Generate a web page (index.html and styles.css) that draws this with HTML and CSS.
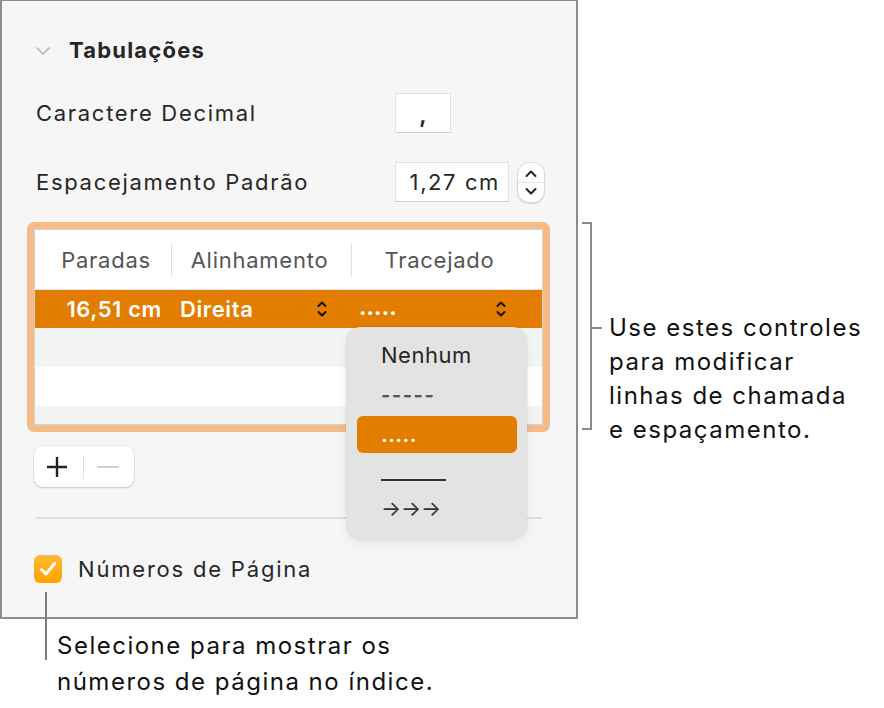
FILE: index.html
```html
<!DOCTYPE html>
<html lang="pt">
<head>
  <meta charset="UTF-8" />
  <meta name="viewport" content="width=device-width, initial-scale=1.0"/>
  <title>Tabulações</title>
  <link rel="stylesheet" href="styles.css">
</head>
<body>

  <div class="pagina">
    <div class="fila-superior">

      <!-- Painel de formato -->
      <div class="painel">
        <div class="secao-titulo">
          <svg class="seta-secao" width="14" height="8" viewBox="0 0 14 8">
            <path d="M1 1 L7 7 L13 1" fill="none" stroke="#b4b4b4" stroke-width="1.6" stroke-linecap="round" stroke-linejoin="round"/>
          </svg>
          <span>Tabulações</span>
        </div>

        <div class="linha-campo linha-decimal">
          <span class="rotulo">Caractere Decimal</span>
          <div class="caixa caixa-decimal">,</div>
        </div>

        <div class="linha-campo linha-espaco">
          <span class="rotulo">Espacejamento Padrão</span>
          <div class="grupo-valor">
            <div class="caixa caixa-espaco">1,27 cm</div>
            <div class="passo">
              <svg width="14" height="10" viewBox="0 0 14 10"><path d="M2.5 7 L7 2.5 L11.5 7" fill="none" stroke="#222" stroke-width="2" stroke-linecap="round" stroke-linejoin="round"/></svg>
              <div class="passo-divisor"></div>
              <svg width="14" height="10" viewBox="0 0 14 10"><path d="M2.5 3 L7 7.5 L11.5 3" fill="none" stroke="#222" stroke-width="2" stroke-linecap="round" stroke-linejoin="round"/></svg>
            </div>
          </div>
        </div>

        <!-- Tabela de paradas -->
        <div class="tabela-anel">
          <div class="tabela">
            <div class="tabela-cabecalho">
              <div class="col col-1">Paradas</div>
              <div class="separador"></div>
              <div class="col col-2">Alinhamento</div>
              <div class="separador"></div>
              <div class="col col-3">Tracejado</div>
            </div>
            <div class="tabela-linha selecionada">
              <div class="col col-1 valor-parada">16,51 cm</div>
              <div class="col col-2 celula-menu">
                <span>Direita</span>
                <svg width="10" height="18" viewBox="0 0 10 18"><path d="M1.5 6 L5 2.5 L8.5 6 M1.5 12 L5 15.5 L8.5 12" fill="none" stroke="#111" stroke-width="2" stroke-linecap="round" stroke-linejoin="round"/></svg>
              </div>
              <div class="col col-3 celula-menu celula-tracejado">
                <span>.....</span>
                <svg width="10" height="18" viewBox="0 0 10 18"><path d="M1.5 6 L5 2.5 L8.5 6 M1.5 12 L5 15.5 L8.5 12" fill="none" stroke="#111" stroke-width="2" stroke-linecap="round" stroke-linejoin="round"/></svg>
              </div>
            </div>
            <div class="tabela-linha cinza"></div>
            <div class="tabela-linha"></div>
            <div class="tabela-linha cinza"></div>
          </div>
        </div>

        <div class="botoes-mais-menos">
          <svg class="botao-mais" width="22" height="22" viewBox="0 0 22 22"><path d="M11 1 V21 M1 11 H21" fill="none" stroke="#222" stroke-width="2.4"/></svg>
          <span class="botoes-divisor"></span>
          <span class="botao-menos"></span>
        </div>

        <div class="linha-divisoria"></div>

        <div class="linha-checkbox">
          <div class="checkbox">
            <svg width="20" height="18" viewBox="0 0 20 18"><path d="M3.5 9.5 L8 14 L16.5 3.5" fill="none" stroke="#fff" stroke-width="3" stroke-linecap="round" stroke-linejoin="round"/></svg>
          </div>
          <span>Números de Página</span>
        </div>

        <!-- Menu aberto -->
        <div class="menu-tracejado">
          <div class="menu-item">Nenhum</div>
          <div class="menu-item item-traco">-----</div>
          <div class="menu-item ativo">.....</div>
          <div class="menu-item item-linha"><span class="linha-solida"></span></div>
          <div class="menu-item item-setas">→→→</div>
        </div>
      </div>

      <!-- Nota da direita -->
      <div class="nota-direita">
        <div class="colchete"></div>
        <div class="nota-texto">Use estes controles<br>para modificar<br>linhas de chamada<br>e espaçamento.</div>
      </div>
    </div>

    <div class="nota-inferior">Selecione para mostrar os<br>números de página no índice.</div>
  </div>

</body>
</html>
```

FILE: styles.css
```css
body {
  margin: 0;
  background-color: #ffffff;
  color: #1d1d1d;
  font-family: 'Inter', 'Noto Sans', sans-serif;
}

.pagina {
  display: flex;
  flex-direction: column;
  width: 884px;
}

.fila-superior {
  display: flex;
  align-items: flex-start;
}

/* Painel */
.painel {
  position: relative;
  box-sizing: border-box;
  width: 578px;
  height: 619px;
  background-color: #f6f6f6;
  border: 2px solid #8c8c8c;
  border-top-width: 1px;
  padding: 29px 0 0 32px;
  display: flex;
  flex-direction: column;
}

.secao-titulo {
  display: flex;
  align-items: center;
  height: 40px;
  font-size: 22px;
  font-weight: 700;
  letter-spacing: 1.2px;
  color: #262626;
}

.seta-secao {
  margin-left: 2px;
  margin-right: 19px;
  margin-top: 2px;
}

.linha-campo {
  display: flex;
  align-items: center;
  justify-content: space-between;
  height: 40px;
  font-size: 22px;
  letter-spacing: 1.7px;
  color: #262626;
}

.rotulo {
  margin-left: 2px;
}

.linha-decimal {
  margin-top: 23px;
  width: 417px;
}

.linha-espaco {
  margin-top: 29px;
  width: 511px;
}

.caixa {
  box-sizing: border-box;
  height: 40px;
  background-color: #ffffff;
  border: 1px solid #e2e2e2;
  border-bottom-color: #d0d0d0;
  display: flex;
  align-items: center;
}

.caixa-decimal {
  width: 56px;
  justify-content: center;
  font-weight: 700;
  padding-top: 4px;
  letter-spacing: 0;
}

.grupo-valor {
  display: flex;
  align-items: center;
  gap: 8px;
}

.caixa-espaco {
  width: 114px;
  justify-content: flex-end;
  padding-right: 8px;
  letter-spacing: 1.6px;
}

.passo {
  box-sizing: border-box;
  width: 28px;
  height: 41px;
  background-color: #ffffff;
  border: 1px solid #d8d8d8;
  border-radius: 12px;
  box-shadow: 0 1px 1px rgba(0,0,0,0.12);
  display: flex;
  flex-direction: column;
  align-items: center;
  justify-content: center;
}

.passo-divisor {
  width: 26px;
  height: 1px;
  background-color: #e4e4e4;
  margin: 3px 0;
}

/* Tabela */
.tabela-anel {
  margin-top: 20px;
  margin-left: -7px;
  width: 523px;
  height: 210px;
  box-sizing: border-box;
  border: 7px solid #f5bc8a;
  border-radius: 7px;
  overflow: hidden;
}

.tabela {
  height: 100%;
  background-color: #ffffff;
  border: 1px solid #d2d2d2;
  box-sizing: border-box;
  overflow: hidden;
}

.tabela-cabecalho {
  display: flex;
  align-items: center;
  height: 59px;
  border-bottom: 1px solid #e3e3e3;
  font-size: 22px;
  letter-spacing: 0.75px;
  color: #555555;
}

.col-1 { width: 136px; }
.col-2 { width: 179px; }
.col-3 { width: 187px; }

.tabela-cabecalho .col {
  box-sizing: border-box;
  text-align: center;
}

.tabela-cabecalho .col-1 { padding-left: 6px; }
.tabela-cabecalho .col-2 { padding-right: 4px; }
.tabela-cabecalho .col-3 { padding-right: 12px; }

.separador {
  width: 1px;
  height: 33px;
  background-color: #e0e0e0;
}

.tabela-linha {
  display: flex;
  height: 39px;
}

.tabela-linha.cinza {
  background-color: #f3f4f4;
}

.selecionada {
  height: 38px;
  background-color: #e27d00;
  color: #ffffff;
  font-size: 22px;
  font-weight: 600;
  letter-spacing: 0.6px;
  align-items: center;
}

.valor-parada {
  box-sizing: border-box;
  text-align: right;
  padding-right: 9px;
}

.selecionada .col-2 {
  width: 180px;
}

.celula-menu {
  box-sizing: border-box;
  display: flex;
  align-items: center;
  justify-content: space-between;
  padding-left: 9px;
  padding-right: 24px;
}

.celula-tracejado {
  padding-left: 8px;
  padding-right: 32px;
}

.celula-tracejado span {
  font-weight: 700;
  margin-top: -4px;
  letter-spacing: 0.2px;
}

/* Botões + e - */
.botoes-mais-menos {
  margin-top: 14px;
  width: 100px;
  height: 41px;
  box-sizing: border-box;
  padding-left: 12px;
  background-color: #ffffff;
  border-radius: 9px;
  box-shadow: 0 0 0 1px rgba(0,0,0,0.05), 0 1px 2px rgba(0,0,0,0.15);
  display: flex;
  align-items: center;
}

.botao-mais {
  margin-right: 15px;
}

.botoes-divisor {
  width: 1px;
  height: 24px;
  background-color: #e2e2e2;
}

.botao-menos {
  width: 22px;
  height: 2px;
  background-color: #d0d0d0;
  margin-left: 13px;
}

.linha-divisoria {
  margin-top: 30px;
  margin-left: 2px;
  width: 506px;
  height: 2px;
  background-color: #dedede;
}

.linha-checkbox {
  margin-top: 36px;
  display: flex;
  align-items: center;
  gap: 16px;
  font-size: 22px;
  letter-spacing: 1.8px;
  color: #262626;
}

.checkbox {
  width: 28px;
  height: 28px;
  border-radius: 6px;
  background: linear-gradient(#ffbb33, #ffa000);
  display: flex;
  align-items: center;
  justify-content: center;
}

/* Menu aberto */
.menu-tracejado {
  position: absolute;
  left: 344px;
  top: 326px;
  width: 181px;
  height: 213px;
  box-sizing: border-box;
  background-color: #e3e3e3;
  border-radius: 15px;
  box-shadow: 0 0 0 1px rgba(0,0,0,0.04), 0 4px 12px rgba(0,0,0,0.06);
  padding: 8px 10px 0 11px;
  display: flex;
  flex-direction: column;
  font-size: 22px;
  letter-spacing: 0.5px;
  color: #262626;
}

.menu-item {
  height: 40px;
  display: flex;
  align-items: center;
  padding-left: 24px;
  border-radius: 6px;
}

.item-traco {
  color: #555;
  font-size: 20px;
  font-weight: 700;
  letter-spacing: 1.5px;
}

.menu-item.ativo {
  height: 37px;
  margin-top: 1px;
  background-color: #e27d00;
  color: #ffffff;
  font-size: 20px;
  font-weight: 700;
  letter-spacing: 0.5px;
}

.item-linha {
  height: 34px;
  align-items: flex-end;
  padding-bottom: 6px;
  box-sizing: border-box;
}

.linha-solida {
  width: 65px;
  height: 2px;
  background-color: #333;
}

.item-setas {
  height: 42px;
  font-size: 21px;
  color: #333;
  letter-spacing: 0;
}

/* Notas */
.nota-direita {
  display: flex;
  align-items: flex-start;
  margin-left: 4px;
}

.colchete {
  margin-top: 222px;
  width: 10px;
  height: 208px;
  box-sizing: border-box;
  border: 2px solid #8a8a8a;
  border-left: none;
}

.nota-texto {
  position: relative;
  margin-top: 311px;
  margin-left: 17px;
  font-size: 24px;
  letter-spacing: 1.5px;
  line-height: 34px;
  color: #111;
  white-space: nowrap;
}

.nota-texto::before {
  content: "";
  position: absolute;
  left: -17px;
  top: 16px;
  width: 10px;
  height: 2px;
  background-color: #8a8a8a;
}

.nota-inferior {
  position: relative;
  margin-top: 9px;
  padding-left: 57px;
  font-size: 24px;
  letter-spacing: 1.5px;
  line-height: 36px;
  color: #111;
}

.nota-inferior::before {
  content: "";
  position: absolute;
  left: 45px;
  top: -36px;
  width: 2px;
  height: 68px;
  background-color: #7a7a7a;
}
```
